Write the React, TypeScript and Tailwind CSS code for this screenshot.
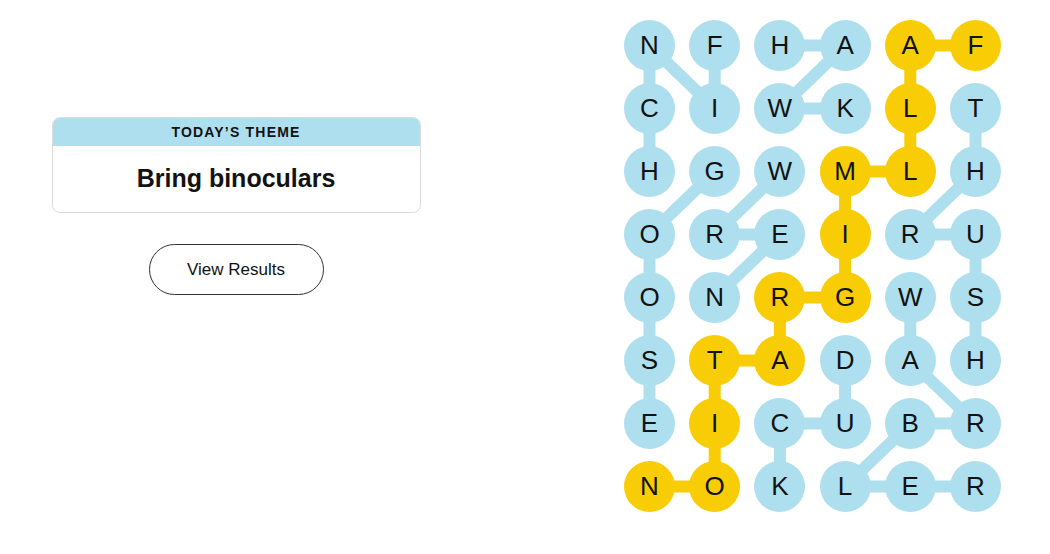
import React from "react";

const letters = [
  "NFHAAF",
  "CIWKLT",
  "HGWMLH",
  "OREIRU",
  "ONRGWS",
  "STADAH",
  "EICUBR",
  "NOKLER",
];

type P = [number, number];
const blueEdges: [P, P][] = [
  [[0, 1], [1, 1]], [[1, 1], [0, 0]], [[0, 0], [1, 0]], [[1, 0], [2, 0]],
  [[2, 1], [3, 0]], [[3, 0], [4, 0]], [[4, 0], [5, 0]], [[5, 0], [6, 0]],
  [[0, 2], [0, 3]], [[0, 3], [1, 2]], [[1, 2], [1, 3]],
  [[2, 2], [3, 1]], [[3, 1], [3, 2]], [[3, 2], [4, 1]],
  [[1, 5], [2, 5]], [[2, 5], [3, 4]], [[3, 4], [3, 5]], [[3, 5], [4, 5]], [[4, 5], [5, 5]],
  [[4, 4], [5, 4]], [[5, 4], [6, 5]], [[6, 5], [6, 4]], [[6, 4], [7, 3]], [[7, 3], [7, 4]], [[7, 4], [7, 5]],
  [[5, 3], [6, 3]], [[6, 3], [6, 2]], [[6, 2], [7, 2]],
];
const yellowPath: P[] = [
  [0, 5], [0, 4], [1, 4], [2, 4], [2, 3], [3, 3], [4, 3], [4, 2], [5, 2], [5, 1], [6, 1], [7, 1], [7, 0],
];
const yellowSet = new Set(yellowPath.map(([r, c]) => `${r}-${c}`));

const cx = (c: number) => 25.5 + 65.2 * c;
const cy = (r: number) => 25.5 + 63 * r;

export default function App() {
  return (
    <div className="w-[1050px] h-[554px] bg-white flex" style={{ fontFamily: '"Liberation Sans", Arial, sans-serif' }}>
      <div className="w-[472px] flex flex-col items-center pt-[117px]">
        <div className="w-[369px] h-[96px] rounded-[8px] border border-[#dcdcdc] overflow-hidden flex flex-col">
          <div className="h-[28px] bg-[#aedfee] flex items-center justify-center text-[14px] font-bold tracking-[1.2px] text-[#121212]">
            TODAY’S THEME
          </div>
          <div className="flex-1 flex items-center justify-center text-[25px] font-bold text-[#121212]">
            Bring binoculars
          </div>
        </div>
        <button className="mt-[31px] w-[175px] h-[51px] rounded-full border border-[#333] text-[17px] text-[#121212] bg-white">
          View Results
        </button>
      </div>
      <div className="ml-[152px] pt-[20px]">
        <div className="relative">
          <svg className="absolute inset-0" width="377" height="492">
            {blueEdges.map(([a, b], i) => (
              <line key={i} x1={cx(a[1])} y1={cy(a[0])} x2={cx(b[1])} y2={cy(b[0])} stroke="#aedfee" strokeWidth={12} />
            ))}
            {yellowPath.slice(1).map((p, i) => {
              const a = yellowPath[i];
              return <line key={i} x1={cx(a[1])} y1={cy(a[0])} x2={cx(p[1])} y2={cy(p[0])} stroke="#f8cd05" strokeWidth={12} />;
            })}
          </svg>
          <div className="relative grid grid-cols-[repeat(6,51px)] gap-x-[14.2px] gap-y-[12px]">
            {letters.flatMap((row, r) =>
              row.split("").map((ch, c) => (
                <div
                  key={`${r}-${c}`}
                  className={`w-[51px] h-[51px] rounded-full flex items-center justify-center text-[26px] text-[#121212] ${
                    yellowSet.has(`${r}-${c}`) ? "bg-[#f8cd05]" : "bg-[#aedfee]"
                  }`}
                >
                  {ch}
                </div>
              ))
            )}
          </div>
        </div>
      </div>
    </div>
  );
}
